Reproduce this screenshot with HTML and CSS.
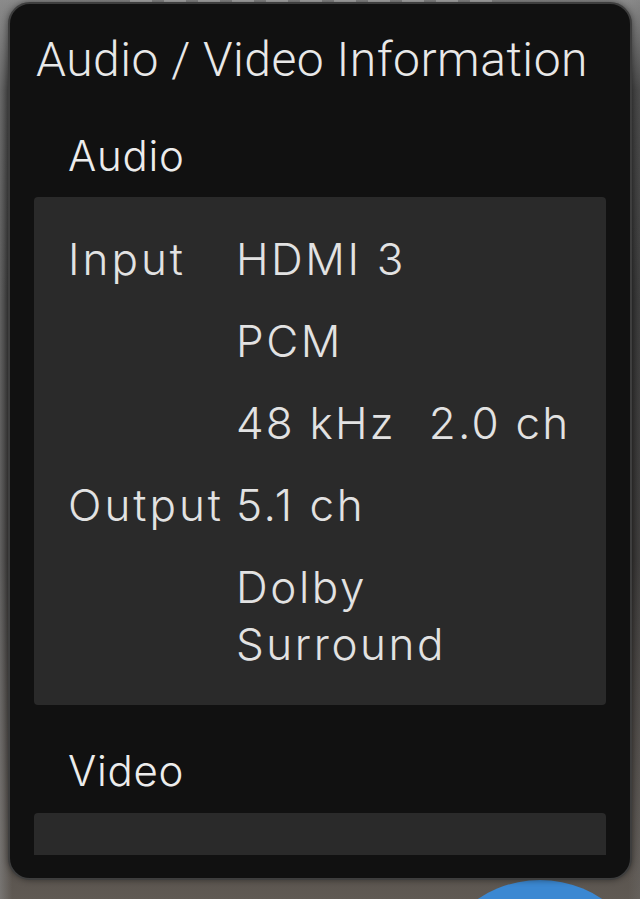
FILE: index.html
```html
<!DOCTYPE html>
<html lang="en">
<head>
<meta charset="utf-8">
<title>Audio / Video Information</title>
<link rel="stylesheet" href="styles.css">
</head>
<body>
<div class="backdrop">
  <div class="bg-line"></div>
  <div class="bg-button"></div>
</div>
<div class="modal">
  <h1 class="title">Audio / Video Information</h1>
  <div class="scroll">
    <h2 class="section">Audio</h2>
    <div class="panel">
      <div class="label">Input</div>
      <div class="values">
        <div class="value">HDMI 3</div>
        <div class="value">PCM</div>
        <div class="value value-pair"><span class="part">48 kHz</span><span class="part">2.0 ch</span></div>
      </div>
      <div class="label">Output</div>
      <div class="values">
        <div class="value">5.1 ch</div>
        <div class="value">Dolby Surround</div>
      </div>
    </div>
    <h2 class="section">Video</h2>
    <div class="panel panel-empty"></div>
  </div>
</div>
</body>
</html>
```
FILE: styles.css
```css
html, body {
  margin: 0;
  padding: 0;
}
body {
  width: 640px;
  height: 899px;
  overflow: hidden;
  position: relative;
  box-sizing: border-box;
  padding: 2px 8px 0 8px;
  background:
    linear-gradient(to right, rgba(140,140,140,0.55) 0, rgba(140,140,140,0) 12px, rgba(0,0,0,0) 628px, rgba(120,120,120,0.25) 640px),
    linear-gradient(to bottom, #8a8a8a 0, #3c3c3c 90px, #2b2b2b 300px, #2d2b2a 560px, #4a4541 760px, #5f5953 899px);
  font-family: Inter, "Noto Sans", sans-serif;
}
.backdrop {
  position: absolute;
  inset: 0;
  z-index: 0;
}
.bg-line {
  position: absolute;
  left: 130px;
  top: 0;
  width: 370px;
  height: 3px;
  background: repeating-linear-gradient(to right, #bdbdbd 0 22px, transparent 22px 34px);
  opacity: 0.7;
  filter: blur(0.6px);
}
.bg-button {
  position: absolute;
  left: 428px;
  top: 880px;
  width: 224px;
  height: 224px;
  border-radius: 50%;
  background: #3b88d2;
}
.modal {
  position: relative;
  z-index: 1;
  box-sizing: border-box;
  width: 624px;
  height: 878px;
  background: #111111;
  border: 2px solid #3e3e3e;
  border-radius: 22px;
  box-shadow: 0 0 6px rgba(0,0,0,0.45);
  padding: 27px 0 23px 0;
  display: flex;
  flex-direction: column;
}
.title {
  margin: 0;
  padding: 0 0 0 26px;
  font-family: Roboto, "Liberation Sans", sans-serif;
  font-weight: 300;
  font-size: 48px;
  line-height: 57.6px;
  letter-spacing: 0.5px;
  color: #e8e8e8;
  white-space: nowrap;
}
.scroll {
  flex: 1;
  min-height: 0;
  overflow: hidden;
  padding: 0 24px;
  display: flex;
  flex-direction: column;
}
.section {
  margin: 40px 0 14px 34px;
  font-weight: 300;
  font-size: 42px;
  line-height: 54.6px;
  letter-spacing: 0.7px;
  color: #ececec;
}
.panel {
  flex: none;
  background: #2a2a2a;
  border-radius: 4px;
  padding: 34px 34px 32px 34px;
  display: grid;
  grid-template-columns: auto 1fr;
  column-gap: 12px;
  row-gap: 25px;
  font-size: 44px;
  line-height: 57px;
  font-weight: 300;
  letter-spacing: 2.6px;
  color: #e2e2e2;
}
.panel-empty {
  min-height: 120px;
}
.label {
  letter-spacing: 3px;
}
.panel + .section {
  margin-top: 39px;
}
.values {
  display: flex;
  flex-direction: column;
  gap: 25px;
  min-width: 0;
}
.value-pair {
  display: flex;
  flex-wrap: nowrap;
  white-space: nowrap;
  gap: 33px;
}
.part {
  letter-spacing: 2.2px;
}
```
